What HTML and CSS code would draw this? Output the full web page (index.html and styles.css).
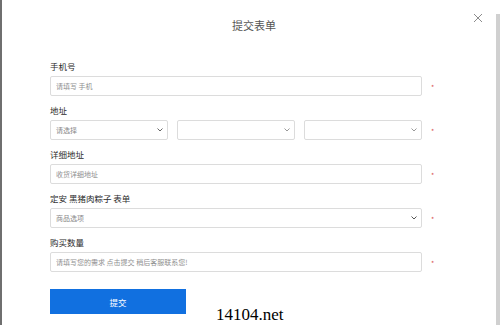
FILE: index.html
```html
<!DOCTYPE html>
<html lang="zh-CN">
<head>
    <meta charset="UTF-8">
    <meta name="viewport" content="width=device-width, initial-scale=1.0">
    <title>提交表单</title>
    <link rel="stylesheet" href="styles.css">
</head>
<body>
    <div class="page">
        <div class="modal">
            <div class="header">
                <h2 class="title">提交表单</h2>
                <button class="close" aria-label="关闭">
                    <svg width="10" height="10" viewBox="0 0 10 10">
                        <path d="M1 1 L9 9 M9 1 L1 9" stroke="#8c8c8c" stroke-width="1" fill="none"/>
                    </svg>
                </button>
            </div>
            <form class="form">
                <div class="group">
                    <label>手机号</label>
                    <div class="row">
                        <input class="field" type="text" placeholder="请填写 手机">
                        <span class="req">*</span>
                    </div>
                </div>
                <div class="group">
                    <label>地址</label>
                    <div class="row">
                        <div class="selects">
                            <div class="field select"><span>请选择</span><svg width="6" height="4" viewBox="0 0 6 4"><path d="M0.5 0.5 L3 3 L5.5 0.5" stroke="#666" fill="none"/></svg></div>
                            <div class="field select"><span></span><svg width="6" height="4" viewBox="0 0 6 4"><path d="M0.5 0.5 L3 3 L5.5 0.5" stroke="#999" fill="none"/></svg></div>
                            <div class="field select"><span></span><svg width="6" height="4" viewBox="0 0 6 4"><path d="M0.5 0.5 L3 3 L5.5 0.5" stroke="#999" fill="none"/></svg></div>
                        </div>
                        <span class="req">*</span>
                    </div>
                </div>
                <div class="group">
                    <label>详细地址</label>
                    <div class="row">
                        <input class="field" type="text" placeholder="收货详细地址">
                        <span class="req">*</span>
                    </div>
                </div>
                <div class="group">
                    <label>定安 黑猪肉粽子 表单</label>
                    <div class="row">
                        <div class="field select"><span>商品选项</span><svg width="6" height="4" viewBox="0 0 6 4"><path d="M0.5 0.5 L3 3 L5.5 0.5" stroke="#555" fill="none"/></svg></div>
                        <span class="req">*</span>
                    </div>
                </div>
                <div class="group">
                    <label>购买数量</label>
                    <div class="row">
                        <input class="field" type="text" placeholder="请填写您的需求 点击提交 稍后客服联系您!">
                        <span class="req">*</span>
                    </div>
                </div>
                <button type="button" class="submit">提交</button>
            </form>
            <span class="watermark">14104.net</span>
        </div>
        <div class="scrollbar"></div>
    </div>
</body>
</html>
```

FILE: styles.css
```css
/* Page */
body {
    margin: 0;
    font-family: "Noto Sans CJK SC", "Noto Sans", sans-serif;
    background: #fff;
    color: #333;
}

.page {
    display: flex;
    height: 325px;
    overflow: hidden;
}

/* Modal */
.modal {
    position: relative;
    flex: 1;
    border-left: 2px solid #6f6f6f;
    padding: 0 0 0 48px;
}

.header {
    padding-top: 15px;
    height: 30px;
    margin-right: 48px;
}

.title {
    margin: 0;
    font-size: 11px;
    font-weight: normal;
    line-height: 20px;
    color: #555;
    text-align: center;
    padding-left: 10px;
}

.close {
    position: absolute;
    top: 11px;
    right: 13px;
    padding: 0;
    border: none;
    background: none;
    cursor: pointer;
}

/* Form */
.form {
    display: flex;
    flex-direction: column;
    gap: 8px;
    margin-top: 15px;
}

.group {
    display: flex;
    flex-direction: column;
    gap: 4px;
}

.group label {
    font-size: 8.5px;
    line-height: 12px;
    color: #2b2b2b;
}

.row {
    display: flex;
    align-items: center;
}

.field {
    box-sizing: border-box;
    width: 372px;
    height: 20px;
    margin: 0;
    padding: 0 5px;
    border: 1px solid #dcdcdc;
    border-radius: 2px;
    background: #fff;
    font-family: inherit;
    font-size: 7px;
    color: #666;
    outline: none;
}

.field::placeholder {
    color: #8f8f8f;
}

.select {
    display: flex;
    align-items: center;
    justify-content: space-between;
    padding: 0 4px 0 5px;
    color: #888;
}

.selects {
    display: flex;
    gap: 9px;
    width: 372px;
}

.selects .select {
    flex: 1;
    width: auto;
}

.req {
    margin-left: 9px;
    font-size: 7px;
    color: #d9534f;
    line-height: 1;
    padding-top: 2px;
}

.submit {
    align-self: flex-start;
    width: 136px;
    height: 25px;
    margin-top: 9px;
    border: none;
    border-radius: 0;
    background-color: #1170e0;
    color: #fff;
    font-family: inherit;
    font-size: 8.5px;
    cursor: pointer;
}

.watermark {
    position: absolute;
    left: 212px;
    top: 305px;
    font-family: "Liberation Serif", serif;
    font-size: 17px;
    color: #000;
    background: #fff;
    line-height: 20px;
    padding: 0 2px;
}

/* Scrollbar strip */
.scrollbar {
    width: 4px;
    margin-top: 14px;
    background: #d0d0d0;
}
```
